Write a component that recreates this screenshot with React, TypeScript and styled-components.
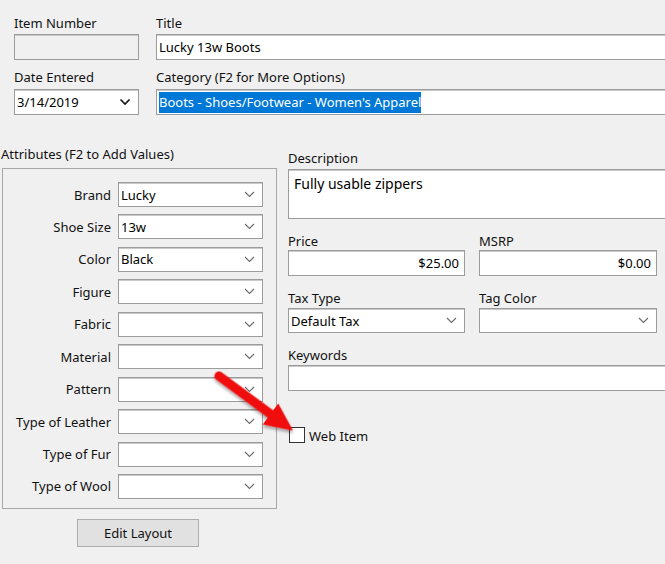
import styled, { createGlobalStyle } from "styled-components";

const GlobalStyle = createGlobalStyle`
  html, body {
    margin: 0;
    padding: 0;
    background: #f0f0f0;
  }
  * {
    box-sizing: border-box;
  }
`;

const Page = styled.div`
  position: relative;
  width: 665px;
  height: 564px;
  overflow: hidden;
  background: #f0f0f0;
  font-family: "Noto Sans", "Liberation Sans", sans-serif;
  font-size: 13px;
  color: #111;
`;

/* top block: item number / title / date / category */
const TopGrid = styled.div`
  display: grid;
  grid-template-columns: 125px 1fr;
  column-gap: 17px;
  row-gap: 10px;
  padding: 16px 0 0 14px;
`;

const Field = styled.div`
  display: flex;
  flex-direction: column;
  min-width: 0;
`;

const Label = styled.label<{ $gap?: number }>`
  display: block;
  line-height: 15px;
  height: 15px;
  white-space: nowrap;
  margin-bottom: ${(p) => p.$gap ?? 2}px;
`;

const Box = styled.div<{ $h?: number; $right?: boolean; $off?: boolean; $wide?: boolean }>`
  display: flex;
  align-items: ${(p) => (p.$h && p.$h > 30 ? "flex-start" : "center")};
  justify-content: ${(p) => (p.$right ? "flex-end" : "flex-start")};
  height: ${(p) => p.$h ?? 26}px;
  width: ${(p) => (p.$wide ? "calc(100% + 20px)" : "100%")};
  padding: 0 ${(p) => (p.$right ? 5 : 2)}px 0 2px;
  background: ${(p) => (p.$off ? "#f0f0f0" : "#fff")};
  border: 1px solid #9c9c9c;
  box-shadow: inset 0 1px 0 #c9c9c9;
  color: #000;
  white-space: nowrap;
  overflow: hidden;
`;

const Memo = styled(Box)`
  padding: 4px 5px;
  font-size: 14px;
  line-height: 20px;
`;

const Picked = styled.span`
  background: #0078d7;
  color: #fff;
  padding: 1px 0;
  line-height: 19px;
`;

const SelectBox = styled(Box)`
  justify-content: space-between;
  padding-right: 7px;
`;

const Chevron = ({ strong }: { strong?: boolean }) =>
  strong ? (
    <svg width="12" height="8" viewBox="0 0 12 8">
      <path d="M1.5 1.5 L6 6 L10.5 1.5" fill="none" stroke="#111" strokeWidth="1.6" />
    </svg>
  ) : (
    <svg width="11" height="7" viewBox="0 0 11 7">
      <path d="M1 1 L5.5 5.5 L10 1" fill="none" stroke="#6a6a6a" strokeWidth="1.1" />
    </svg>
  );

const Select = ({ value, strong }: { value?: string; strong?: boolean }) => (
  <SelectBox $h={strong ? 26 : 25}>
    <span>{value}</span>
    <Chevron strong={strong} />
  </SelectBox>
);

/* bottom block */
const Bottom = styled.div`
  display: flex;
  margin-top: 32px;
`;

const LeftCol = styled.div`
  width: 277px;
  flex: none;
  display: flex;
  flex-direction: column;
`;

const GroupTitle = styled(Label)`
  padding-left: 1px;
  margin-bottom: 6px;
`;

const GroupBox = styled.div`
  margin-left: 2px;
  width: 275px;
  height: 341px;
  border: 1px solid #a7a7a7;
  padding: 13px 0 0 0;
  display: flex;
  flex-direction: column;
  gap: 7.44px;
`;

const AttrRow = styled.div`
  display: grid;
  grid-template-columns: 108px 145px;
  column-gap: 7px;
  align-items: center;
`;

const AttrName = styled.span`
  text-align: right;
  white-space: nowrap;
`;

const EditButton = styled.button`
  align-self: center;
  margin: 10px 0 0 -1px;
  width: 122px;
  height: 28px;
  background: #e1e1e1;
  border: 1px solid #adadad;
  font-family: inherit;
  font-size: 13px;
  color: #111;
  padding: 0;
`;

const RightCol = styled.div`
  flex: 1;
  min-width: 0;
  margin-left: 11px;
  padding-top: 4px;
  display: flex;
  flex-direction: column;
  gap: 15px;
`;

const Pair = styled.div`
  display: grid;
  grid-template-columns: 177px 178px;
  column-gap: 14px;
`;

const CheckRow = styled.div`
  display: flex;
  align-items: center;
  gap: 4px;
  margin-top: 21px;
  margin-left: 1px;
  height: 16px;
`;

const CheckSquare = styled.span`
  width: 16px;
  height: 16px;
  border: 1px solid #333;
  background: #fff;
`;

const CheckText = styled.span`
  font-size: 13px;
  line-height: 16px;
  margin-top: 2px;
`;

const Overlay = styled.svg`
  position: absolute;
  left: 0;
  top: 0;
  pointer-events: none;
`;

const attributes: [string, string][] = [
  ["Brand", "Lucky"],
  ["Shoe Size", "13w"],
  ["Color", "Black"],
  ["Figure", ""],
  ["Fabric", ""],
  ["Material", ""],
  ["Pattern", ""],
  ["Type of Leather", ""],
  ["Type of Fur", ""],
  ["Type of Wool", ""],
];

const Arrow = () => (
  <Overlay width="665" height="564" viewBox="0 0 665 564">
    <defs>
      <filter id="sh" x="-20%" y="-20%" width="140%" height="140%">
        <feDropShadow dx="1.5" dy="2" stdDeviation="1.5" floodColor="#000" floodOpacity="0.35" />
      </filter>
    </defs>
    <g transform="translate(219 376) rotate(36.4)" filter="url(#sh)">
      <line x1="0" y1="0" x2="70" y2="0" stroke="#f00a0a" strokeWidth="9" strokeLinecap="round" />
      <polygon points="64,-13 92,0 64,13" fill="#f00a0a" />
    </g>
  </Overlay>
);

export default function App() {
  return (
    <Page>
      <GlobalStyle />
      <TopGrid>
        <Field>
          <Label $gap={3}>Item Number</Label>
          <Box $off />
        </Field>
        <Field>
          <Label $gap={3}>Title</Label>
          <Box $wide>Lucky 13w Boots</Box>
        </Field>
        <Field>
          <Label $gap={4}>Date Entered</Label>
          <Select value="3/14/2019" strong />
        </Field>
        <Field>
          <Label $gap={4}>Category (F2 for More Options)</Label>
          <Box $wide>
            <Picked>Boots - Shoes/Footwear - Women's Apparel</Picked>
          </Box>
        </Field>
      </TopGrid>

      <Bottom>
        <LeftCol>
          <GroupTitle>Attributes (F2 to Add Values)</GroupTitle>
          <GroupBox>
            {attributes.map(([name, value]) => (
              <AttrRow key={name}>
                <AttrName>{name}</AttrName>
                <Select value={value} />
              </AttrRow>
            ))}
          </GroupBox>
          <EditButton>Edit Layout</EditButton>
        </LeftCol>

        <RightCol>
          <Field>
            <Label $gap={3}>Description</Label>
            <Memo as="div" $h={50} $wide>
              Fully usable zippers
            </Memo>
          </Field>
          <Pair>
            <Field>
              <Label $gap={1}>Price</Label>
              <Box $right>$25.00</Box>
            </Field>
            <Field>
              <Label $gap={1}>MSRP</Label>
              <Box $right>$0.00</Box>
            </Field>
          </Pair>
          <Pair>
            <Field>
              <Label>Tax Type</Label>
              <Select value="Default Tax" />
            </Field>
            <Field>
              <Label>Tag Color</Label>
              <Select />
            </Field>
          </Pair>
          <Field>
            <Label>Keywords</Label>
            <Box $wide />
          </Field>
          <CheckRow>
            <CheckSquare />
            <CheckText>Web Item</CheckText>
          </CheckRow>
        </RightCol>
      </Bottom>
      <Arrow />
    </Page>
  );
}
